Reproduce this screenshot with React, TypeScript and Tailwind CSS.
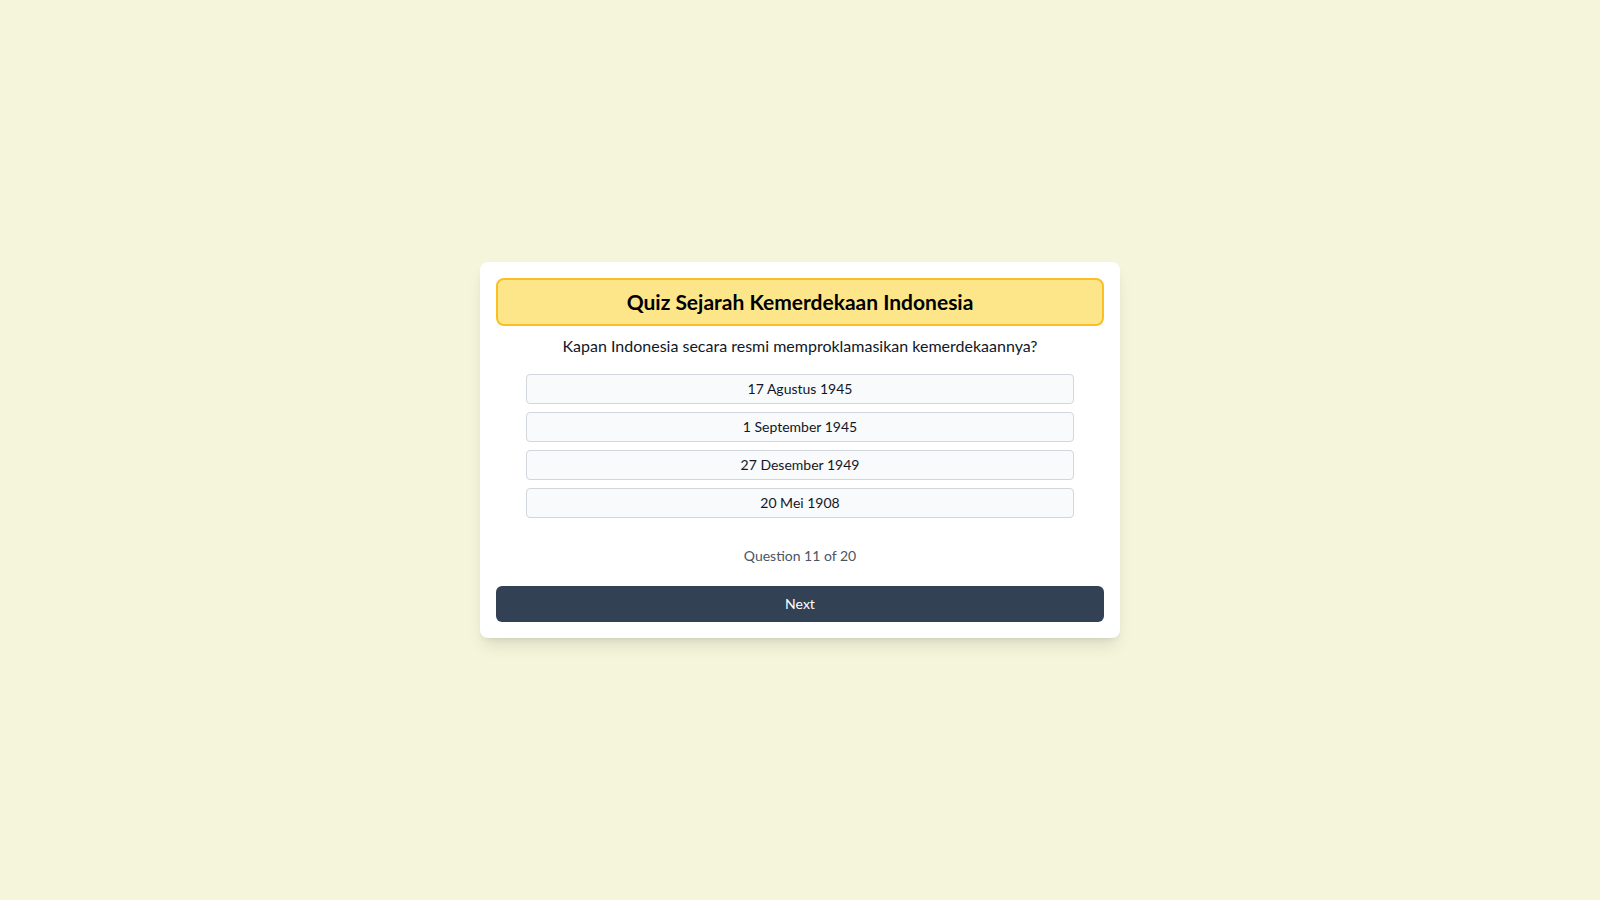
import React, { useState } from 'react';

const options = ['17 Agustus 1945', '1 September 1945', '27 Desember 1949', '20 Mei 1908'];

export default function App() {
  const [selected, setSelected] = useState<number | null>(null);

  return (
    <div
      className="min-h-screen w-full bg-[#f5f5dc] flex items-center justify-center"
      style={{ fontFamily: 'Lato, "Noto Sans", sans-serif' }}
    >
      <div className="w-[640px] bg-white rounded-lg shadow-lg p-4">
        {/* title */}
        <div className="h-12 flex items-center justify-center bg-[#fde68a] border-2 border-[#fbbf24] rounded-lg">
          <h1 className="text-[21px] font-bold text-black">Quiz Sejarah Kemerdekaan Indonesia</h1>
        </div>

        <p className="mt-2 text-center text-base leading-6 text-gray-900">
          Kapan Indonesia secara resmi memproklamasikan kemerdekaannya?
        </p>

        <div className="mt-4 w-[90%] mx-auto flex flex-col gap-2">
          {options.map((opt, i) => (
            <button
              key={i}
              onClick={() => setSelected(i)}
              className={
                'h-[30px] w-full rounded border border-gray-300 text-sm text-gray-900 ' +
                (selected === i ? 'bg-gray-200' : 'bg-gray-50')
              }
            >
              {opt}
            </button>
          ))}
        </div>

        <p className="mt-7 text-center text-sm leading-5 text-gray-600">Question 11 of 20</p>

        <button className="mt-5 h-9 w-full rounded-md bg-[#334155] text-sm text-white">Next</button>
      </div>
    </div>
  );
}
